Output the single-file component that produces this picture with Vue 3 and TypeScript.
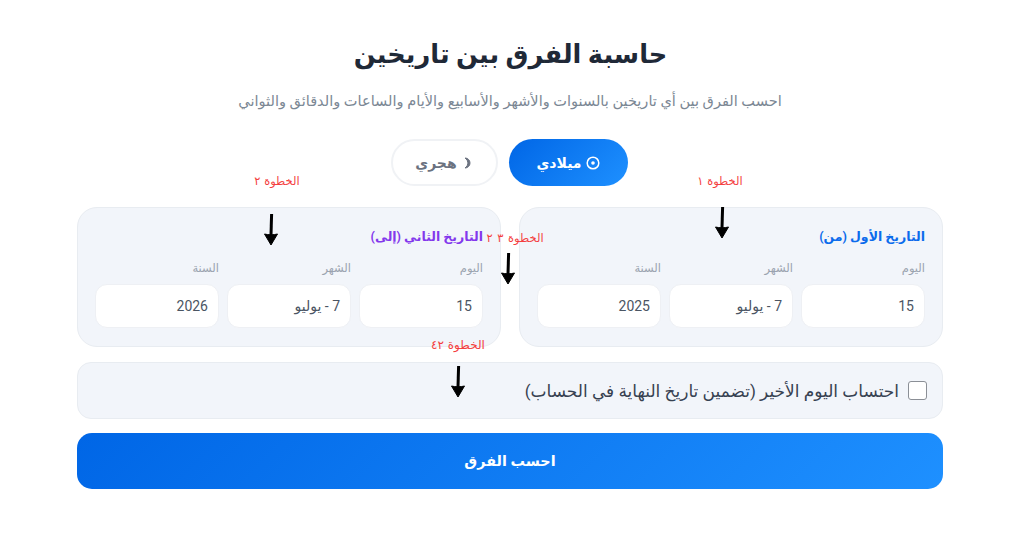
<script setup lang="ts">
interface Field { label: string; value: string }
interface Panel { title: string; tone: string; fields: Field[] }
const panels: Panel[] = [
  { title: 'التاريخ الأول (من)', tone: 'blue', fields: [
    { label: 'اليوم', value: '15' }, { label: 'الشهر', value: '7 - يوليو' }, { label: 'السنة', value: '2025' } ] },
  { title: 'التاريخ الثاني (إلى)', tone: 'purple', fields: [
    { label: 'اليوم', value: '15' }, { label: 'الشهر', value: '7 - يوليو' }, { label: 'السنة', value: '2026' } ] },
]
const notes = [
  { text: 'الخطوة ١', cls: 'n1' }, { text: 'الخطوة ٢', cls: 'n2' },
  { text: 'الخطوة ٣ ٢', cls: 'n3' }, { text: 'الخطوة ٤٢', cls: 'n4' },
]
const arrows = ['a1', 'a2', 'a3', 'a4']
</script>

<template>
  <main class="page" dir="rtl">
    <h1 class="title">حاسبة الفرق بين تاريخين</h1>
    <p class="sub">احسب الفرق بين أي تاريخين بالسنوات والأشهر والأسابيع والأيام والساعات والدقائق والثواني</p>
    <div class="toggle">
      <button class="pill on">
        <svg width="14" height="14" viewBox="0 0 14 14"><circle cx="7" cy="7" r="5.8" fill="none" stroke="currentColor" stroke-width="1.5"/><circle cx="7" cy="7" r="1.8" fill="currentColor"/></svg>
        ميلادي
      </button>
      <button class="pill">
        <svg width="12" height="14" viewBox="0 0 12 14"><path d="M4 2 A5 5 0 0 1 4 12 A6.5 6.5 0 0 0 7 7 A6.5 6.5 0 0 0 4 2Z" fill="#6b7280" stroke="#6b7280" stroke-width="1" stroke-linejoin="round"/></svg>
        هجري
      </button>
    </div>
    <div class="panels">
      <section v-for="p in panels" :key="p.title" class="panel">
        <h2 class="ptitle" :class="p.tone">{{ p.title }}</h2>
        <div class="fields">
          <div v-for="f in p.fields" :key="f.label" class="field">
            <span class="flabel">{{ f.label }}</span>
            <div class="input">{{ f.value }}</div>
          </div>
        </div>
      </section>
    </div>
    <label class="check"><span class="box"></span>احتساب اليوم الأخير (تضمين تاريخ النهاية في الحساب)</label>
    <button class="go">احسب الفرق</button>

    <span v-for="n in notes" :key="n.cls" class="note" :class="n.cls">{{ n.text }}</span>
    <svg v-for="a in arrows" :key="a" class="arrow" :class="a" width="16" height="34" viewBox="0 0 16 34">
      <path d="M8.6 1 L8 22" stroke="#000" stroke-width="3" fill="none"/>
      <path d="M1.5 21 C5 22 11 22 14.5 21 L8 32Z" fill="#000" stroke="#000" stroke-linejoin="round"/>
    </svg>
  </main>
</template>

<style>
html, body { margin: 0; background: #fff; }
</style>

<style scoped>
.page {
  position: relative;
  box-sizing: border-box;
  width: 1024px;
  height: 538px;
  padding: 31px 81px 0 77px;
  display: flex;
  flex-direction: column;
  font-family: Roboto, "DejaVu Sans", sans-serif;
  color: #1f2937;
  overflow: hidden;
}
.title { margin: 0; text-align: center; font-size: 25.7px; line-height: 46px; font-weight: 700; color: #1f2937; padding-left: 1px; }
.sub { margin: 14px 0 0; text-align: center; font-size: 14.55px; line-height: 22px; color: #7b8794; }
.toggle { display: flex; justify-content: center; gap: 11px; margin-top: 26px; padding-right: 2px; }
.pill {
  height: 47px; width: 107px; padding: 0; border-radius: 24px; border: 2px solid #f0f2f5; background: #fff;
  display: flex; align-items: center; justify-content: center; gap: 4px; font: 700 14px Roboto, "DejaVu Sans", sans-serif; color: #6b7280;
  box-sizing: border-box;
}
.pill.on { border: 0; width: 119px; color: #fff; background: linear-gradient(135deg, #0066e6, #1e90ff); }
.panels { display: flex; gap: 18px; margin-top: 21px; }
.panel {
  flex: 1; height: 140px; box-sizing: border-box; padding: 18px 17px 0; background: #f2f5fa;
  border: 1px solid #e8ecf1; border-radius: 20px;
}
.ptitle { margin: 0; font-size: 12.5px; line-height: 22px; font-weight: 700; }
.blue { color: #0b6bec; }
.purple { color: #8338ec; }
.fields { display: flex; gap: 8px; margin-top: 12px; }
.field { flex: 1; display: flex; flex-direction: column; gap: 8px; }
.flabel { font-size: 11.5px; line-height: 16px; color: #9aa3af; }
.input {
  height: 44px; box-sizing: border-box; display: flex; align-items: center; padding: 0 10px 0 12px;
  background: #fff; border: 1px solid #eef0f4; border-radius: 12px; font-size: 14px; color: #4b5563;
}
.check {
  height: 57px; box-sizing: border-box; margin-top: 15px; padding: 0 15px; display: flex; align-items: center; gap: 9px;
  background: #f2f5fa; border: 1px solid #e8ecf1; border-radius: 14px; font-size: 17px; color: #374151;
}
.box { width: 19px; height: 19px; box-sizing: border-box; border: 1.5px solid #8b8f96; border-radius: 3px; background: #fff; flex: none; }
.go {
  height: 56px; margin-top: 14px; border: 0; border-radius: 15px; color: #fff; font: 700 14.4px Roboto, "DejaVu Sans", sans-serif;
  background: linear-gradient(135deg, #0066e6, #1e90ff);
}
.note { position: absolute; font-family: "DejaVu Sans", sans-serif; font-size: 11.5px; line-height: 16px; color: #f43f3f; transform: translate(-50%, -50%); white-space: nowrap; }
.n1 { left: 720px; top: 181px; }
.n2 { left: 277px; top: 181px; }
.n3 { left: 515px; top: 238px; word-spacing: 1px; }
.n4 { left: 458px; top: 345px; font-size: 12px; }
.arrow { position: absolute; }
.a1 { left: 714px; top: 206px; }
.a2 { left: 263px; top: 213px; }
.a3 { left: 500px; top: 252px; }
.a4 { left: 450px; top: 365px; }
</style>
